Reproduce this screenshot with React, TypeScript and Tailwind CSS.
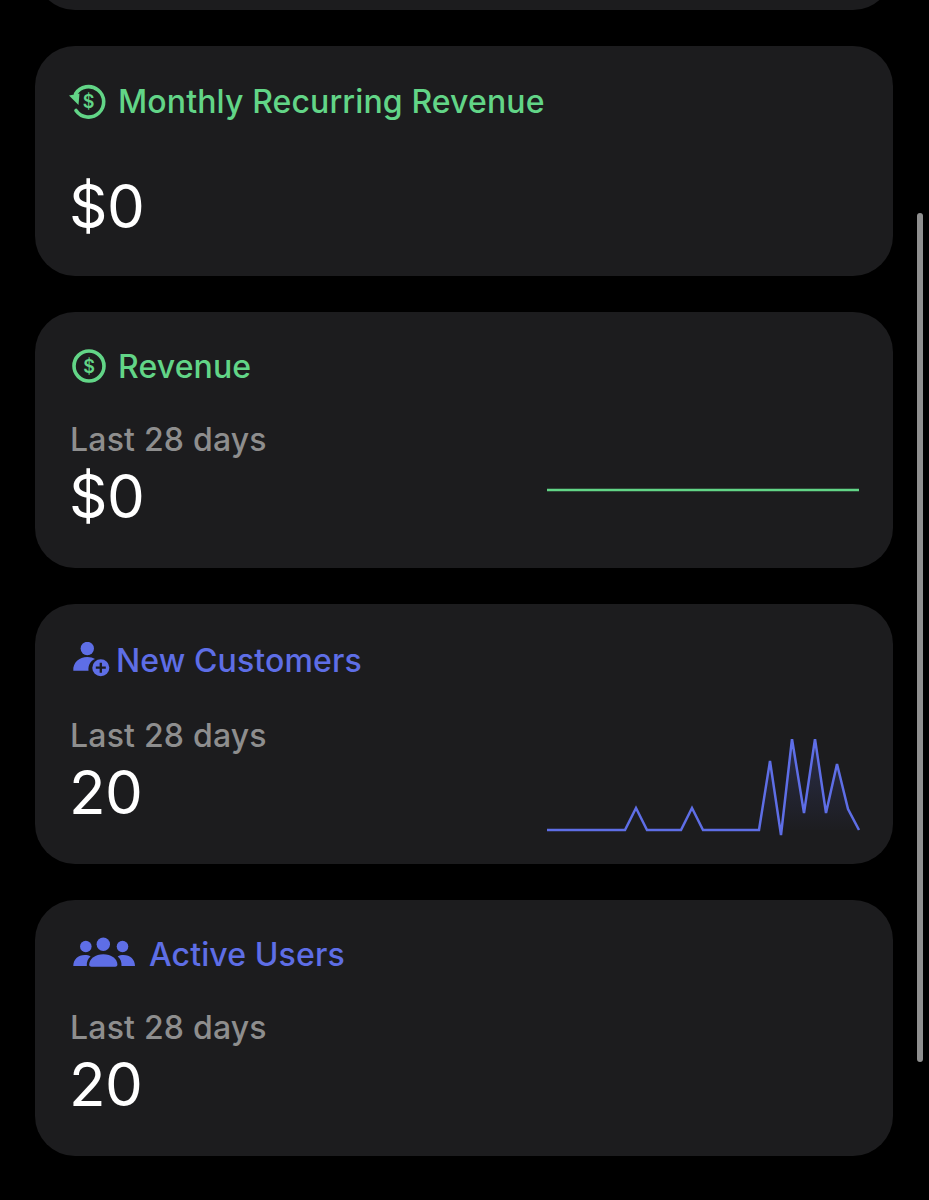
const green = "#62d587";
const blue = "#5e6ee6";

function MrrIcon() {
  return (
    <svg width="38" height="38" viewBox="0 0 38 38" fill="none" className="-ml-[1px] shrink-0">
      <path d="M6.500 12A15.200 15.200 0 1 1 7 28.500" stroke={green} strokeWidth="3.6" strokeLinecap="round" />
      <path d="M0 13.500 L10.500 11.500 L9.500 23 Z" fill={green} />
      <text x="19.500" y="25.500" textAnchor="middle" fontSize="18" fontWeight="600" fill={green} fontFamily="Inter, sans-serif">$</text>
    </svg>
  );
}

function RevenueIcon() {
  return (
    <svg width="34" height="34" viewBox="0 0 34 34" fill="none" className="ml-[2px] shrink-0">
      <circle cx="17" cy="17" r="15" stroke={green} strokeWidth="3.6" />
      <text x="17" y="23.500" textAnchor="middle" fontSize="18" fontWeight="600" fill={green} fontFamily="Inter, sans-serif">$</text>
    </svg>
  );
}

function NewCustomerIcon() {
  return (
    <svg width="40" height="36" viewBox="0 0 40 36" fill="none" className="shrink-0">
      <circle cx="17.300" cy="6.500" r="6.700" fill={blue} />
      <path d="M3.300 28.700c-.6-8 6-13.700 14-13.700 3.200 0 5.800.7 7.700 2-4.500 1.800-7 6-6.500 11.700Z" fill={blue} />
      <circle cx="30.800" cy="25.700" r="8.500" fill={blue} />
      <path d="M30.800 20.700v10M25.800 25.700h10" stroke="#1c1c1e" strokeWidth="2.300" />
    </svg>
  );
}

function UsersIcon() {
  return (
    <svg width="62" height="38" viewBox="0 0 62 38" fill="none" className="ml-[3px] shrink-0">
      <circle cx="12.800" cy="11.500" r="5.800" fill={blue} />
      <circle cx="49.500" cy="11.500" r="5.800" fill={blue} />
      <circle cx="30.300" cy="9.300" r="6.700" fill={blue} />
      <path d="M.3 31c0-6.500 4.700-11 11.500-11 2.300 0 4.200.5 5.800 1.400-2.700 2.200-4.100 5.500-3.800 9.600Z" fill={blue} />
      <path d="M62 31c0-6.500-4.700-11-11.500-11-2.300 0-4.200.5-5.800 1.400 2.700 2.200 4.100 5.500 3.800 9.600Z" fill={blue} />
      <path d="M18.500 31.700c-1.700 0-2.300-.8-2.300-2.200 0-5.500 6.300-10.200 14.100-10.200s14.100 4.700 14.100 10.200c0 1.400-.6 2.200-2.300 2.200Z" fill={blue} />
    </svg>
  );
}

const revenueLine = "0,5 312,5";
const customerPoints = "0,91 78,91 89,69 100,91 134,91 145,69 156,91 212,91 223,22 234,96 245,0 257,74 268,0 279,74 290,25 301,70 312,91";

function Spark({ color, points, fill, height }: { color: string; points: string; fill?: boolean; height: number }) {
  return (
    <svg width="314" height={height} viewBox={`0 0 314 ${height}`} fill="none" className="shrink-0">
      <defs>
        <linearGradient id="sparkFill" x1="0" y1="0" x2="0" y2="1">
          <stop offset="0" stopColor="#5e6ee6" stopOpacity="0.22" />
          <stop offset="1" stopColor="#5e6ee6" stopOpacity="0" />
        </linearGradient>
      </defs>
      {fill && <path d="M212 91 L223 22 L234 96 L245 0 L257 74 L268 0 L279 74 L290 25 L301 70 L312 91 Z" fill="url(#sparkFill)" />}
      <polyline points={points} stroke={color} strokeWidth="2.5" strokeLinejoin="miter" />
    </svg>
  );
}

function Card({ icon, title, color, gap, children, className }: { icon: React.ReactNode; title: string; color: string; gap: string; children: React.ReactNode; className: string }) {
  return (
    <section className={`rounded-[40px] bg-[#1c1c1e] pl-[35px] pr-[32px] ${className}`}>
      <div className={`flex h-[38px] items-center ${gap}`}>
        {icon}
        <h2 className="pt-[1px] text-[32px] font-medium tracking-[0.12px]" style={{ color }}>{title}</h2>
      </div>
      {children}
    </section>
  );
}

function Metric({ value, label }: { value: string; label?: string }) {
  return (
    <div>
      {label && <p className="text-[32px] leading-[40px] font-medium tracking-[0.2px] text-[#8e8e8e]">{label}</p>}
      <p className="-ml-[1px] text-[60px] leading-[72px] tracking-[-0.5px] text-white">{value}</p>
    </div>
  );
}

export default function App() {
  return (
    <div className="relative h-[1200px] w-[929px] overflow-hidden bg-black font-['Inter',sans-serif]">
      <div className="flex flex-col gap-[36px] pl-[35px] pr-[36px]">
        <div className="-mt-[90px] h-[100px] rounded-[40px] bg-[#1c1c1e]" />

        <Card className="h-[230px] pt-[36px]" color={green} title="Monthly Recurring Revenue" gap="gap-[11px]" icon={<MrrIcon />}>
          <div className="mt-[50px]">
            <Metric value="$0" />
          </div>
        </Card>

        <Card className="h-[256px] pt-[35px]" color={green} title="Revenue" gap="gap-[12px]" icon={<RevenueIcon />}>
          <div className="mt-[35px] flex items-start justify-between">
            <Metric label="Last 28 days" value="$0" />
            <div className="mt-[65px]">
              <Spark color={green} points={revenueLine} height={10} />
            </div>
          </div>
        </Card>

        <Card className="h-[260px] pt-[37px]" color={blue} title="New Customers" gap="gap-[6px]" icon={<NewCustomerIcon />}>
          <div className="mt-[37px] flex items-start justify-between">
            <Metric label="Last 28 days" value="20" />
            <div className="mt-[23px]">
              <Spark color={blue} points={customerPoints} fill height={98} />
            </div>
          </div>
        </Card>

        <Card className="h-[256px] pt-[35px]" color={blue} title="Active Users" gap="gap-[14px]" icon={<UsersIcon />}>
          <div className="mt-[35px]">
            <Metric label="Last 28 days" value="20" />
          </div>
        </Card>
      </div>

      {/* overlay scrollbar */}
      <div className="absolute left-[917px] top-[213px] h-[849px] w-[6px] rounded-full bg-[#8f8f8f]" />
    </div>
  );
}
